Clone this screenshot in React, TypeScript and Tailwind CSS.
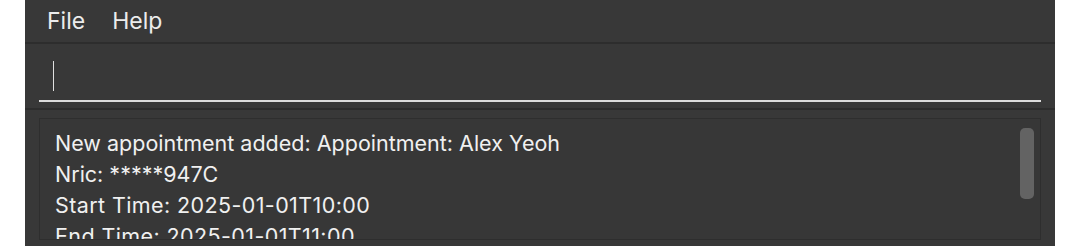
import React from "react";

export default function App() {
  const font = { fontFamily: 'Inter, "Liberation Sans", Arial, sans-serif' };
  return (
    <div className="w-[1080px] h-[246px] bg-white flex overflow-hidden" style={font}>
      <div className="ml-[25px] w-[1030px] h-[246px] bg-[#383838] flex flex-col">
        <div className="h-[42px] flex items-center gap-[27px] pl-[22px] text-[23px] text-[#ececec] pt-[1px]">
          <span>File</span>
          <span>Help</span>
        </div>
        <div className="h-[2px] bg-[#2d2d2d]" />
        <div className="h-[64px] px-[14px] flex flex-col">
          <div className="h-[56px] flex items-center pl-[14px]">
            <div className="w-[1px] h-[30px] bg-[#e0e0e0] mt-[8px]" />
          </div>
          <div className="h-[2px] bg-[#dcdcdc]" />
        </div>
        <div className="h-[2px] bg-[#2d2d2d]" />
        <div className="px-[14px] pt-[8px]">
          <div className="h-[122px] border border-[#2e2e2e] bg-[#373737] flex overflow-hidden">
            <div className="flex-1 pl-[15px] pt-[9px] text-[21.5px] leading-[31px] text-[#f0f0f0]">
              <div>New appointment added: Appointment: Alex Yeoh</div>
              <div>Nric: *****947C</div>
              <div className="tracking-[0.4px]">Start Time: 2025-01-01T10:00</div>
              <div className="tracking-[0.4px]">End Time: 2025-01-01T11:00</div>
            </div>
            <div className="w-[20px] pt-[9px] flex justify-start">
              <div className="w-[14px] h-[71px] rounded-[5px] bg-[#636363]" />
            </div>
          </div>
        </div>
      </div>
    </div>
  );
}
